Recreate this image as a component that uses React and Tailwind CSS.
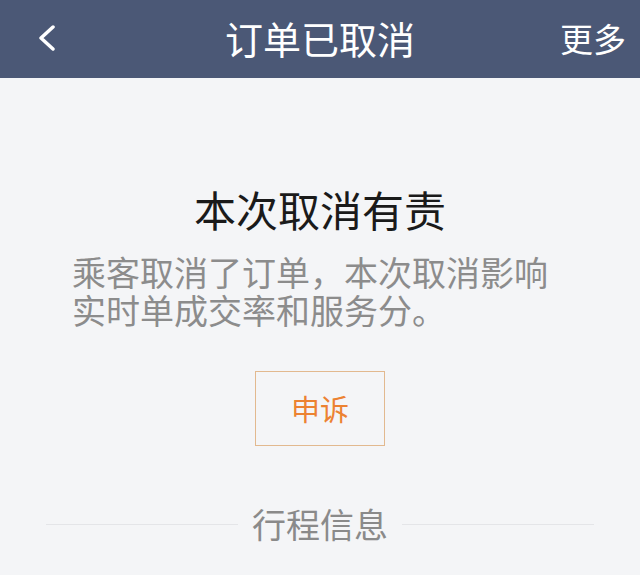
export default function App() {
  const font = { fontFamily: '"Noto Sans CJK SC", "Noto Sans", sans-serif' };

  return (
    <div className="min-h-[575px] bg-[#f4f5f7]" style={font}>
      {/* Top bar */}
      <div className="h-[78px] bg-[#4b5876] flex items-center text-white">
        <div className="w-[110px] pl-[37px] flex items-center">
          <svg width="20" height="28" viewBox="0 0 20 28" fill="none">
            <polyline
              points="16,2 4,13 16,24"
              stroke="white"
              strokeWidth="3.5"
              strokeLinecap="round"
              strokeLinejoin="round"
            />
          </svg>
        </div>
        <div className="flex-1 text-center text-[38px] leading-none pb-[2px]">订单已取消</div>
        <div className="w-[110px] pr-[14px] text-right text-[33px] leading-none pb-[2px]">更多</div>
      </div>

      {/* Result */}
      <div className="pt-[106px] px-[72px]">
        <h1 className="text-center text-[42px] leading-[50px] text-[#1a1a1a]">本次取消有责</h1>
        <p className="mt-[19px] text-[34px] leading-[38px] text-[#8c8c8c]">
          乘客取消了订单，本次取消影响实时单成交率和服务分。
        </p>
      </div>

      <div className="mt-[42px] flex justify-center">
        <button
          type="button"
          className="w-[130px] h-[75px] border border-[#e2b98f] text-[#ec8232] text-[29px] leading-none"
        >
          申诉
        </button>
      </div>

      {/* Trip info divider */}
      <div className="mt-[58px] px-[46px] flex items-center">
        <div className="flex-1 h-px bg-[#e4e5e8]" />
        <span className="px-[14px] text-[34px] leading-[40px] text-[#8a8a8a]">行程信息</span>
        <div className="flex-1 h-px bg-[#e4e5e8]" />
      </div>
    </div>
  );
}
